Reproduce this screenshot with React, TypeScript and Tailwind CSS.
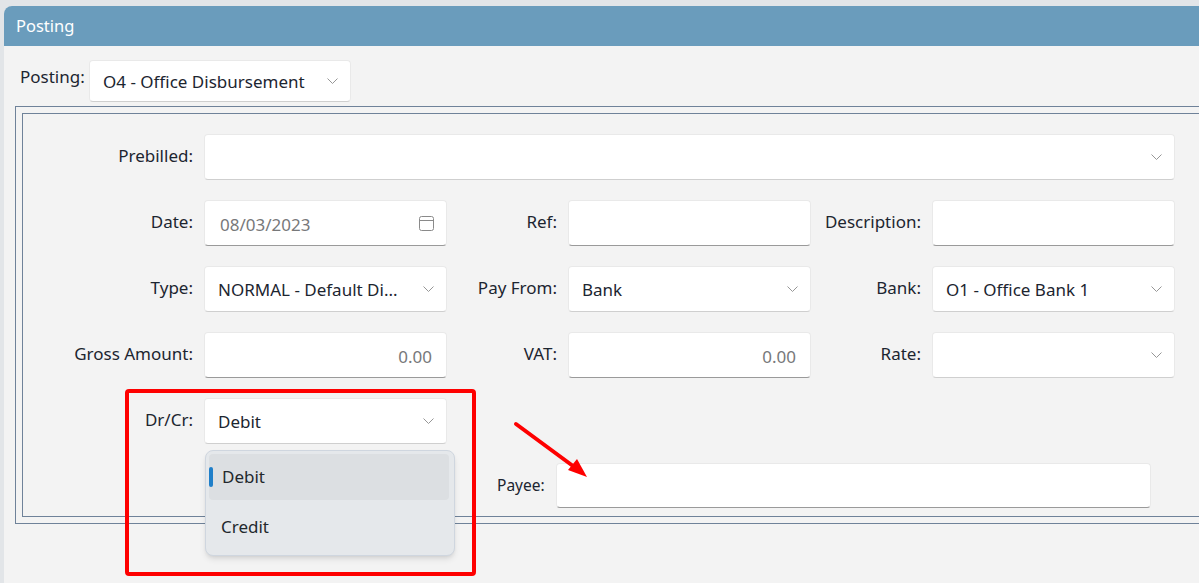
import { ReactNode } from "react";

const font = "font-['Noto_Sans',sans-serif]";

function Chevron() {
  return (
    <svg className="shrink-0" width="11" height="6" viewBox="0 0 11 6" fill="none">
      <path d="M0.5 0.5l5 5 5-5" stroke="#969696" strokeWidth="1" />
    </svg>
  );
}

function Label({ children, className = "w-[121px]" }: { children: ReactNode; className?: string }) {
  return (
    <span className={`${className} shrink-0 pr-[11px] pb-[2px] text-right text-[17px] whitespace-nowrap text-[#1c2530]`}>
      {children}
    </span>
  );
}

function Select({ value, className = "w-[243px] h-[46px]" }: { value?: string; className?: string }) {
  return (
    <div className={`${className} flex shrink-0 items-center justify-between rounded border border-[#e9e9e9] border-b-[#cfcfcf] bg-white pr-[12px] pl-[13px] text-[17px] text-[#1c2530]`}>
      <span className="pt-px whitespace-nowrap">{value}</span>
      <Chevron />
    </div>
  );
}

function Input({ value, right, className = "w-[243px] h-[46px]", children }: { value?: string; right?: boolean; className?: string; children?: ReactNode }) {
  return (
    <div className={`${className} flex shrink-0 items-center rounded border border-[#e9e9e9] border-b-[#9a9a9a] bg-white text-[17px] text-[#77787a] ${right ? "justify-end pr-[14px]" : "justify-between pr-[12px] pl-[15px]"}`}>
      <span className="pt-[3px]">{value}</span>
      {children}
    </div>
  );
}

export default function App() {
  return (
    <div className={`${font} relative h-[583px] w-[1199px] overflow-hidden bg-[#e2e5e8] pt-[6px] pl-[4px]`}>
      <div className="h-[600px] w-[1300px] rounded-tl-lg bg-[#f3f3f3]">
        <div className="flex h-[40px] items-center rounded-tl-lg bg-[#6a9cbc] pl-3 text-[16.5px] text-white">
          Posting
        </div>

        <div className="flex items-start pt-[14px] pl-[16px]">
          <span className="w-[69px] pt-[4px] text-[17px] text-[#1c2530]">Posting:</span>
          <Select value="O4 - Office Disbursement" className="h-[42px] w-[262px]" />
        </div>

        <div className="mt-[4px] ml-[11px] h-[418px] w-[1270px] border border-[#6f8299] p-[6px]">
          <div className="h-[404px] border border-[#6f8299] pt-[20px]">
            <div className="flex items-center">
              <Label className="w-[181px]">Prebilled:</Label>
              <Select className="h-[46px] w-[971px]" />
            </div>

            <div className="mt-[20px] flex items-center">
              <Label className="w-[181px]">Date:</Label>
              <Input value="08/03/2023">
                <svg width="15" height="15" viewBox="0 0 15 15" fill="none">
                  <rect x="0.5" y="0.5" width="14" height="14" rx="2" stroke="#8a8a8a" />
                  <path d="M0.5 4.5h14" stroke="#8a8a8a" />
                </svg>
              </Input>
              <Label>Ref:</Label>
              <Input />
              <Label>Description:</Label>
              <Input />
            </div>

            <div className="mt-[20px] flex items-center">
              <Label className="w-[181px]">Type:</Label>
              <Select value="NORMAL - Default Di..." />
              <Label>Pay From:</Label>
              <Select value="Bank" />
              <Label>Bank:</Label>
              <Select value="O1 - Office Bank 1" />
            </div>

            <div className="mt-[20px] flex items-center">
              <Label className="w-[181px]">Gross Amount:</Label>
              <Input value="0.00" right />
              <Label>VAT:</Label>
              <Input value="0.00" right />
              <Label>Rate:</Label>
              <Select />
            </div>

            <div className="mt-[20px] flex items-center">
              <Label className="w-[181px]">Dr/Cr:</Label>
              <Select value="Debit" />
            </div>

            <div className="mt-[19px] flex items-center">
              <span className="ml-[474px] w-[59px] text-[15.5px] text-[#1c2530]">Payee:</span>
              <Input className="h-[45px] w-[595px]" />
            </div>
          </div>
        </div>
      </div>

      {/* open dropdown */}
      <div className="absolute top-[450px] left-[205px] flex h-[106px] w-[250px] flex-col rounded-lg border border-[#cfd6df] bg-[#e5e8eb] pt-[3px] pr-[5px] pl-[3px] text-[17px] text-[#23282d] shadow-md">
        <div className="relative flex h-[46px] shrink-0 items-center rounded bg-[#dcdfe2] pl-[13px]">
          <span className="absolute left-0 h-[20px] w-[4px] rounded bg-[#1f7fc9]" />
          Debit
        </div>
        <div className="flex h-[54px] items-center pl-[12px]">Credit</div>
      </div>

      {/* annotations */}
      <div className="absolute top-[389px] left-[125px] h-[187px] w-[351px] rounded-sm border-4 border-[#fe0000]" />
      <svg className="absolute top-[415px] left-[505px]" width="100" height="70" viewBox="0 0 100 70" fill="none">
        <path d="M11 9L68 51" stroke="#fe0000" strokeWidth="4" strokeLinecap="round" />
        <path d="M82 62L63 55L72 44Z" fill="#fe0000" />
      </svg>
    </div>
  );
}
